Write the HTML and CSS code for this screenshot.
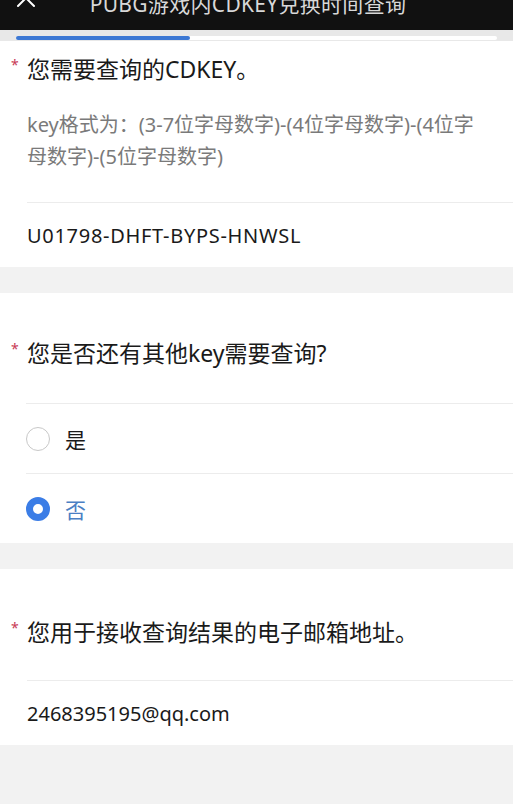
FILE: index.html
```html
<!DOCTYPE html>
<html lang="zh-CN">
<head>
    <meta charset="UTF-8">
    <meta name="viewport" content="width=device-width, initial-scale=1.0">
    <title>PUBG游戏内CDKEY兑换时间查询</title>
    <link rel="stylesheet" href="styles.css">
</head>
<body>
    <div class="top-bar">
        <div class="top-row">
            <svg class="close-icon" width="20" height="20" viewBox="0 0 20 20">
                <path d="M2 2 L18 18 M18 2 L2 18" stroke="#fff" stroke-width="2" fill="none" stroke-linecap="round"/>
            </svg>
            <span class="top-title">PUBG游戏内CDKEY兑换时间查询</span>
            <span class="more-dots"><i></i><i></i><i></i></span>
        </div>
    </div>

    <div class="progress-band">
        <div class="progress-track"><div class="progress-fill"></div></div>
    </div>

    <div class="card card-first">
        <div class="question"><span class="req">*</span>您需要查询的CDKEY。</div>
        <div class="hint">key格式为：(3-7位字母数字)-(4位字母数字)-(4位字母数字)-(5位字母数字)</div>
        <div class="answer answer-key">U01798-DHFT-BYPS-HNWSL</div>
    </div>

    <div class="card card-radio">
        <div class="question"><span class="req">*</span>您是否还有其他key需要查询?</div>
        <div class="options">
            <div class="option">
                <span class="radio"></span>
                <span class="option-text">是</span>
            </div>
            <div class="option checked">
                <span class="radio"></span>
                <span class="option-text">否</span>
            </div>
        </div>
    </div>

    <div class="card card-email">
        <div class="question"><span class="req">*</span>您用于接收查询结果的电子邮箱地址。</div>
        <div class="answer">2468395195@qq.com</div>
    </div>
</body>
</html>
```

FILE: styles.css
```css
body {
    margin: 0;
    background: #f2f2f2;
    font-family: "Noto Sans", "Noto Sans CJK SC", sans-serif;
    color: #1a1a1a;
}

/* dark app header, cut off at the top */
.top-bar {
    height: 30px;
    background: #111;
    overflow: hidden;
}

.top-row {
    display: flex;
    align-items: center;
    height: 36px;
    margin-top: -15px;
    padding: 0 16px;
}

.close-icon {
    flex-shrink: 0;
    margin-left: 0;
    margin-top: -10px;
}

.top-title {
    flex: 1;
    text-align: center;
    color: #d8d8d8;
    font-size: 21px;
    letter-spacing: 0.3px;
}

.more-dots {
    display: flex;
    gap: 4px;
    margin-right: 14px;
    margin-top: -11px;
}

.more-dots i {
    width: 5px;
    height: 5px;
    border-radius: 50%;
    background: #fff;
}

/* progress */
.progress-band {
    height: 11px;
    background: #e8e8e8;
    padding: 6px 16px 0;
    box-sizing: border-box;
}

.progress-track {
    height: 4px;
    background: #fff;
    border-radius: 2px;
}

.progress-fill {
    width: 174px;
    height: 4px;
    background: #3c78d4;
    border-radius: 2px;
}

/* question cards */
.card {
    background: #fff;
    margin-bottom: 26px;
}

.card-first { padding-top: 12px; }
.card-radio { padding-top: 44px; }
.card-email { padding-top: 47px; }

.question {
    position: relative;
    padding-left: 27px;
    font-size: 23px;
    line-height: 32px;
    color: #1a1a1a;
}

.req {
    position: absolute;
    left: 11px;
    top: -4px;
    color: #c83a55;
    font-size: 14px;
}

.hint {
    margin-top: 24px;
    padding: 0 27px;
    font-size: 20px;
    line-height: 32px;
    color: #7a7a7a;
}

.answer {
    margin-left: 27px;
    border-top: 1px solid #ececec;
    height: 64px;
    display: flex;
    align-items: center;
    font-size: 20px;
    color: #1a1a1a;
}

.answer-key { letter-spacing: 0.7px; }

.card-first .answer { margin-top: 29px; }
.card-email .answer { margin-top: 32px; }

.options {
    margin-top: 34px;
    margin-left: 27px;
}

.option {
    display: flex;
    align-items: center;
    gap: 15px;
    height: 69px;
    border-top: 1px solid #ececec;
    margin-left: -1px;
}

.radio {
    width: 24px;
    height: 24px;
    border: 1.5px solid #c8c8c8;
    border-radius: 50%;
    box-sizing: border-box;
}

.option.checked .radio {
    border: 7px solid #3b7de6;
}

.option-text {
    font-size: 21px;
    color: #1a1a1a;
}

.option.checked .option-text {
    color: #4b7fc4;
}
```
